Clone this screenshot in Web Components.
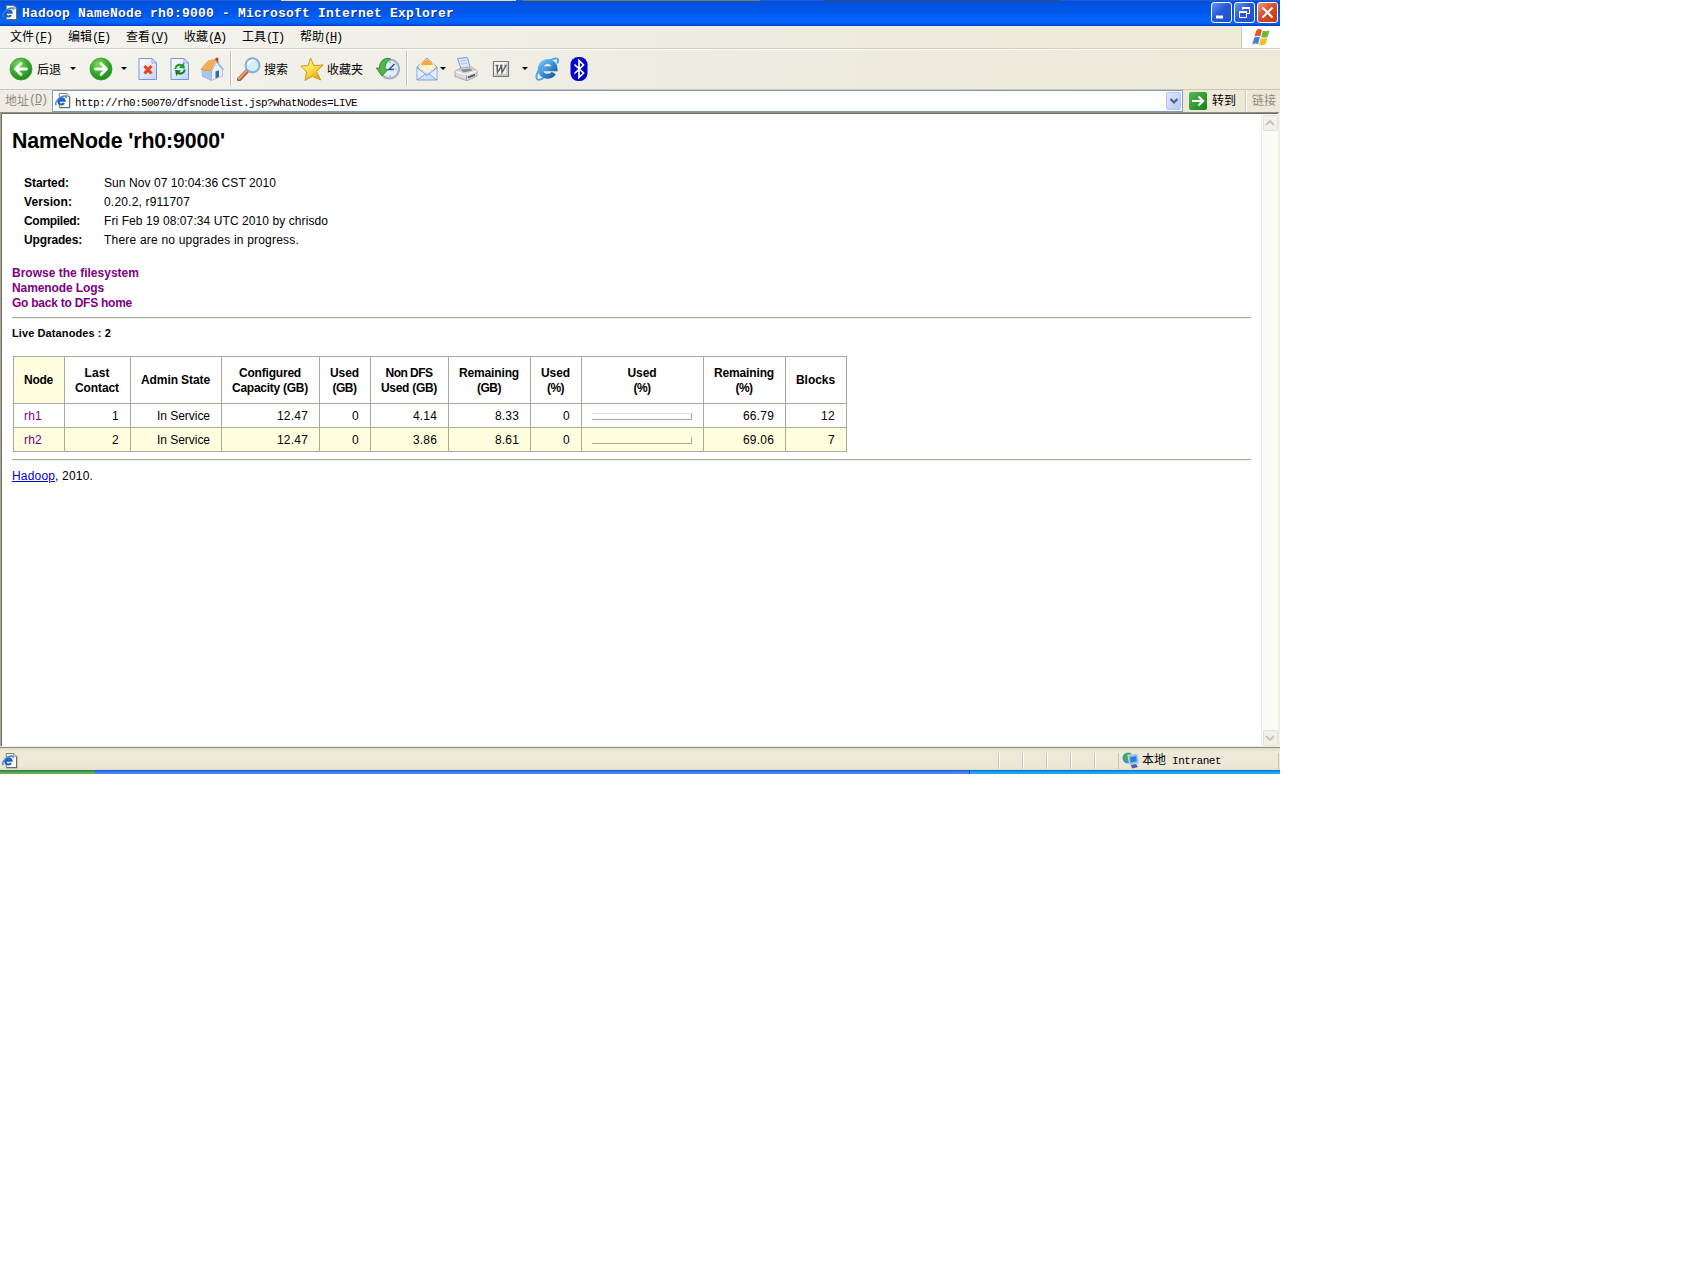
<!DOCTYPE html>
<html lang="zh-CN">
<head>
<meta charset="utf-8">
<title>Hadoop NameNode rh0:9000</title>
<style>
  html, body { margin: 0; background: #fff; }
  body { font: 12px/15px "Liberation Sans", "Noto Sans CJK SC", sans-serif; color: #000; }
</style>
</head>
<body>
<xp-window>
  <xp-title slot="title"></xp-title>
  <xp-menu slot="menu"></xp-menu>
  <xp-toolbar slot="toolbar"></xp-toolbar>
  <xp-address slot="address"></xp-address>
  <dfs-page></dfs-page>
  <xp-status slot="status"></xp-status>
</xp-window>

<script>
const SONG = '"Liberation Mono", "Noto Sans CJK SC", monospace';

// Small base: every element renders its own open shadow root
class Base extends HTMLElement {
  constructor() {
    super();
    this.attachShadow({ mode: 'open' });
    this.shadowRoot.innerHTML = this.template();
  }
}

/* ---------- icons ---------- */
const arrowCircle = (d) => `
  <defs><radialGradient id="g" cx=".4" cy=".3" r=".8"><stop offset="0" stop-color="#7fdc62"/><stop offset=".55" stop-color="#35a62b"/><stop offset="1" stop-color="#167d18"/></radialGradient></defs>
  <circle cx="12" cy="12" r="11" fill="url(#g)" stroke="#3c9a35" stroke-width=".8"/>
  <path d="${d}" fill="none" stroke="#fff" stroke-width="2.8" stroke-linecap="round" stroke-linejoin="round"/>`;

const sheet = `
  <defs><linearGradient id="p" x2="1" y2="1"><stop offset="0" stop-color="#fff"/><stop offset="1" stop-color="#bfd4f8"/></linearGradient></defs>
  <path d="M3 1.5h13l4.5 4.5v16.5h-17.500z" fill="url(#p)" stroke="#7b97cc"/><path d="M16 1.500v4.500h4.500z" fill="#d7e4fb" stroke="#7b97cc" stroke-width=".7"/>`;

const iePage = `
  <path d="M4.500 .5h8l3 3v12h-11z" fill="#fdfdf6" stroke="#77776e"/><path d="M12.500 .5v3h3" fill="#ddd" stroke="#77776e" stroke-width=".8"/><path d="M15.700 4v12M5 15.700h11" stroke="#55554e" stroke-width=".8"/>
  <path d="M9.600 10.800a3.300 3.300 0 1 1 .5-2.700H4" fill="none" stroke="#1b62c4" stroke-width="2.300"/>
  <path d="M1.500 13C-1.500 10.500 5 3 11 3.200c1.200.2 1 1.200.5 2.300" fill="none" stroke="#3a86dc" stroke-width="1.400"/>`;

const ICONS = {
  back: [24, arrowCircle('M12 6.500L6.500 12l5.500 5.500M7 12h10.500')],
  forward: [24, arrowCircle('M12 6.500l5.500 5.500-5.500 5.500M17 12H6.500')],
  stop: [24, sheet + '<path d="M8.500 9l7 7.500M15.500 9l-7 7.500" stroke="#f0401c" stroke-width="3.200"/>'],
  refresh: [24, sheet + `
    <path d="M6.500 12c.3-4.500 4.500-6.200 7.600-4.600l1.600-2 1.300 6-6-.3 1.600-1.800c-2-.8-4 .5-4.300 2.700z" fill="#239b2c"/>
    <path d="M17.500 12.500c-.3 4.500-4.500 6.200-7.600 4.600l-1.600 2-1.300-6 6 .3-1.600 1.800c2 .8 4-.5 4.300-2.700z" fill="#168020"/>`],
  home: [24, `
    <path d="M2 12.500l9.500 1v10L2.500 19.500z" fill="#a9c6f0" stroke="#8aa6d4" stroke-width=".6"/>
    <path d="M11.500 14L16.500 5l6 8v6l-11 4.500z" fill="#e8f0fc" stroke="#93a9d3" stroke-width=".7"/>
    <path d="M.8 12.500L8 4l8.500-2-6 12z" fill="#f7ad52" stroke="#dd8a32" stroke-width=".6"/>
    <path d="M15.800 3l7.700 10" stroke="#a5b8da" stroke-width="1.600"/><path d="M15.500 .8h2.800v5.200L15.500 3z" fill="#d43a22"/>
    <path d="M15.500 14.500l3.500-1.200v6.500l-3.500 1.600z" fill="#3d66a8"/>`],
  search: [24, `
    <path d="M2 22.500l8-8.500" stroke="#a35f37" stroke-width="4.200" stroke-linecap="round"/><path d="M2 21.800l7.500-8" stroke="#e2a47a" stroke-width="2" stroke-linecap="round"/>
    <circle cx="15.500" cy="8.300" r="7" fill="#d3eefe" stroke="#86a9d8" stroke-width="2"/><path d="M10.800 8c.4-3 3-4.800 5.500-4.400" fill="none" stroke="#fff" stroke-width="2"/>`],
  star: [24, `
    <defs><linearGradient id="s" x2=".6" y2="1"><stop offset="0" stop-color="#fff7a5"/><stop offset=".6" stop-color="#ffdd45"/><stop offset="1" stop-color="#e9a21b"/></linearGradient></defs>
    <path d="M10.500 1l3.400 7.700 9.300-.8-6.800 6.600 4.400 8.500-8.500-3.700L5 23.500l1.600-8.700L.8 9l7.400-.4z" fill="url(#s)" stroke="#cd951d" stroke-linejoin="round"/>`],
  history: [24, `
    <circle cx="13.500" cy="12" r="9.500" fill="#e1eefb" stroke="#a3b0c6" stroke-width="2.200"/>
    <path d="M13 12.500l5.500-5.500M12 12.500h6" stroke="#2f5f94" stroke-width="1.600"/><path d="M14 4.500V6M14 18.500V20M20.500 12H19" stroke="#7f95b2" stroke-width="1.200"/>
    <path d="M14.500 1.800C8-.2 3.500 4.500 3.500 11L.3 11l5.700 8 6-6.500-3-.5c0-4 1.500-6.700 5.500-10.200z" fill="#51b648" stroke="#24812a" stroke-width=".8"/>`],
  mail: [24, `
    <path d="M2 10L12 1l10 9v13H2z" fill="#cfe0fb" stroke="#8ba3d0"/>
    <path d="M4 10.500c1-5.500 4-7.500 8-7.500s7 2 8 7.500L12 16z" fill="#fff3ca"/><path d="M6 8c1-4 3-5 6-5s5 1 6 5z" fill="#f6a94a"/>
    <path d="M2 10.500l8 6.500-8 6M22 10.500L14 17l8 6M10 17l2 1.300 2-1.300" fill="none" stroke="#7695cf"/><path d="M2.600 12v10l7-5zM21.400 12v10l-7-5z" fill="#e6effd"/>`],
  print: [24, `
    <path d="M3.500 1.500l10-1 3 11.500-9 1z" fill="#d7e8ff" stroke="#7b99d1"/><path d="M6.500 4l6-.6M7.200 7l6-.6" stroke="#a6c0ea"/>
    <path d="M1 14l6-3 10-1 6 3.500v5.500L13 23.800 1 19.500z" fill="#d9d9d7" stroke="#9b9b9b" stroke-width=".8"/>
    <path d="M6.500 12.500l10-1 2 2-9 2z" fill="#8b8c92"/><path d="M1.500 14.500l10.500 3.300 10.500-4" fill="none" stroke="#fff" stroke-width="1.300"/>
    <path d="M12.500 18v5" stroke="#a0a0a0"/><path d="M14 19.500l7-2.700v2L14 21.500z" fill="#555"/>`],
  word: [18, `
    <path d="M1.500 1.500h15v15h-15z" fill="#f5f5f3" stroke="#777" stroke-width="1.200"/><path d="M3 15h12V3" fill="none" stroke="#b7b7b5" stroke-width="1.300"/>
    <path d="M3.500 5.500h3M5 6l.5 6.500L9.500 6l.5 6.500L14 5.500M8 5.500h2.500M12.500 5.500h2" fill="none" stroke="#62625f" stroke-width="1.500"/>`],
  ie: [24, `
    <defs><linearGradient id="e" x2="1" y2="1"><stop offset="0" stop-color="#73c7fa"/><stop offset="1" stop-color="#0e5cab"/></linearGradient></defs>
    <path d="M18.800 16a7.400 7.400 0 1 1 1.200-4.200H8" fill="none" stroke="url(#e)" stroke-width="5"/>
    <path d="M2.500 22.500C-2 18 10.500 2.500 20.800 1.400c3-.2 2.700 2.600 1.300 5M2.500 22.500c1.800 1 4-.2 6-1.600" fill="none" stroke="#4aa6e6" stroke-width="1.900"/>`],
  bluetooth: [24, `
    <rect x="3.500" width="17" height="24" rx="7.500" fill="#0505c8"/>
    <path d="M7.500 7.500l9 8.500-4.500 4.500v-17L16.500 8l-9 8.500" fill="none" stroke="#fff" stroke-width="1.700"/>`],
  page: [17, iePage],
  zone: [17, `
    <circle cx="6" cy="6" r="5.500" fill="#3d8fd8"/><path d="M1 5c1-4 6-5 8-3L7 4l-.5 6-4-2z" fill="#45aa45"/>
    <path d="M6 3.500l9.500-1.500 1 9-8.500 2z" fill="#78b7f3" stroke="#c3d3e8" stroke-width="1.300"/><path d="M8 5.500l6-1.300.6 5-6 1.300z" fill="#2b7fd6"/>
    <path d="M9 13l5-1 2 3-6 1.500z" fill="#45619a"/>`],
  flag: [20, `
    <path d="M4.500 2.500C7 .5 8.500 1 10.500 2.200L8.600 9C6.500 7.700 4.800 7.800 2.500 9.300z" fill="#e8582b"/>
    <path d="M11.600 2.700c2.200 1.200 4.200 1 6.900-.4l-2 6.900c-2.500 1.400-4.500 1.300-6.800.1z" fill="#73b533"/>
    <path d="M2.200 10.400c2.300-1.500 4-1.400 6.100-.3l-2 7C4.300 15.800 2.700 16 .3 17.400z" fill="#3f82dc"/>
    <path d="M9.400 10.500c2.200 1.200 4.200 1 6.800-.3l-2 7c-2.500 1.300-4.500 1.200-6.800 0z" fill="#f5be25"/>`],
};

class XpIcon extends HTMLElement {
  connectedCallback() {
    if (this.shadowRoot) return;
    this.attachShadow({ mode: 'open' });
    const [box, body] = ICONS[this.getAttribute('name')];
    const size = this.getAttribute('size') || box;
    this.shadowRoot.innerHTML = `
      <style>:host { display: block; flex: none; } svg { display: block; }</style>
      <svg width="${size}" height="${size}" viewBox="0 0 ${box} ${box}">${body}</svg>`;
  }
}

// Text run stretched or tightened to a fixed advance width
class FitText extends HTMLElement {
  connectedCallback() {
    if (this.shadowRoot) return;
    this.attachShadow({ mode: 'open' });
    this.shadowRoot.innerHTML = `
      <style>:host { display: inline-block; white-space: nowrap; flex: none; }</style><slot></slot>`;
    this.style.width = 'max-content';
    const want = Number(this.getAttribute('w'));
    const have = this.getBoundingClientRect().width;
    const count = this.textContent.length;
    this.style.letterSpacing = ((want - have) / count).toFixed(3) + 'px';
    this.style.width = want + 'px';
  }
}

/* ---------- window frame ---------- */
class XpWindow extends Base {
  template() {
    return `
      <style>
        :host { display: grid; width: 1280px; height: 774px; grid-template-rows: 26px 24px 40px 22px 1fr 23px 4px; background: #ece9d8; overflow: hidden; }
        .view { display: flex; min-height: 0; background: #fff; border-top: 1px solid #8f8e82; border-left: 1px solid #aca899; border-right: 2px solid #f1efe2; border-bottom: 1px solid #f1efe2; }
        .inner { flex: 1; display: flex; border-top: 1px solid #716f64; border-left: 1px solid #716f64; }
        .content { flex: 1; }
        .scroll { width: 17px; box-sizing: border-box; background: #fbfbf8; border-left: 1px solid #eeede5; display: flex; flex-direction: column; justify-content: space-between; align-items: center; padding: 1px 0 0; }
        .scroll span { width: 13px; height: 14px; border: 1px solid #e4e2d6; border-radius: 2px; background: #f2f1ea; display: grid; place-items: center; }
        .task { display: flex; }
        .task i { height: 4px; }
        .start { width: 95px; background: linear-gradient(#347638, #58a64f 60%, #6cb966); }
        .bar { flex: 1; background: linear-gradient(#1d51c2, #3c81f3 50%, #4b8dfa); }
        .tray { width: 310px; border-left: 1px solid #0b4aa8; background: linear-gradient(#0c66c0, #18a4f4 50%, #22aefa); }
      </style>
      <slot name="title"></slot>
      <slot name="menu"></slot>
      <slot name="toolbar"></slot>
      <slot name="address"></slot>
      <div class="view"><div class="inner">
        <div class="content"><slot></slot></div>
        <div class="scroll">
          <span><svg width="10" height="8"><path d="M1 6l4-4 4 4" fill="none" stroke="#c7c5b8" stroke-width="2"/></svg></span>
          <span><svg width="10" height="8"><path d="M1 2l4 4 4-4" fill="none" stroke="#c7c5b8" stroke-width="2"/></svg></span>
        </div>
      </div></div>
      <slot name="status"></slot>
      <div class="task"><i class="start"></i><i class="bar"></i><i class="tray"></i></div>`;
  }
}

class XpTitle extends Base {
  template() {
    return `
      <style>
        :host { display: grid; grid-template-rows: 1px 25px; background: #0a5be4; }
        .behind { background: linear-gradient(90deg, #1560dc 281px, #e6d9ad 281px 516px, #1560dc 516px 523px, #69835c 523px 760px, #1560dc 760px 824px, #34506e 824px 1061px, #1560dc 1061px); height: 1px; }
        .bar { display: flex; align-items: center; padding: 0 2px 2px 2px; background: linear-gradient(#0a4cd2, #0054e3 15%, #0057ea 45%, #0066ff 75%, #0062f6 88%, #0040c0); }
        .text { margin-left: 4px; padding-top: 2px; font: bold 13px/20px ${SONG}; color: #fff; text-shadow: 1px 1px #0b2f8c; }
        .buttons { margin-left: auto; display: flex; gap: 2px; }
        .b { width: 19px; height: 19px; border: 1px solid #fff; border-radius: 3px; background: linear-gradient(135deg, #6b93f0, #2859dc 45%, #1d4fd4); }
        .x { background: linear-gradient(135deg, #ee9a80, #dd4c25 45%, #c8340e); }
        svg { display: block; }
      </style>
      <div class="behind"></div>
      <div class="bar">
        <xp-icon name="page" size="16"></xp-icon>
        <span class="text"><fit-text w="432">Hadoop NameNode rh0:9000 - Microsoft Internet Explorer</fit-text></span>
        <div class="buttons">
          <span class="b"><svg width="19" height="19"><path d="M4 14h7" stroke="#fff" stroke-width="3"/></svg></span>
          <span class="b"><svg width="19" height="19" fill="none" stroke="#fff"><path d="M7.500 7V4.500h7v6H12"/><path d="M7 5h8" stroke-width="2"/><path d="M4.500 8.500h7v6h-7z"/><path d="M4 9h8" stroke-width="2"/></svg></span>
          <span class="b x"><svg width="19" height="19"><path d="M4.500 4.500l10 10M14.500 4.500l-10 10" stroke="#fff" stroke-width="2.200"/></svg></span>
        </div>
      </div>`;
  }
}

class XpMenu extends Base {
  template() {
    const items = [['文件', 'F'], ['编辑', 'E'], ['查看', 'V'], ['收藏', 'A'], ['工具', 'T'], ['帮助', 'H']];
    return `
      <style>
        :host { display: flex; box-sizing: border-box; background: linear-gradient(90deg, #f4f3ee, #eeece0 60%, #ece9d8); border-bottom: 1px solid #fff; font: 12px/22px ${SONG}; }
        .row { flex: 1; display: flex; padding: 1px 0 0 10px; box-sizing: border-box; border-bottom: 1px solid #d0cdbd; }
        .item { width: 58px; white-space: nowrap; display: flex; }
        u { text-underline-offset: 1px; }
        .flag { width: 38px; background: #fff; border-left: 1px solid #d0cdbd; border-bottom: 1px solid #d0cdbd; display: grid; place-items: center; }
      </style>
      <div class="row">${items.map(([t, k]) => `<span class="item">${t}<fit-text w="18">(<u>${k}</u>)</fit-text></span>`).join('')}</div>
      <div class="flag"><xp-icon name="flag" size="19"></xp-icon></div>`;
  }
}

class XpToolbar extends Base {
  template() {
    // gap before each part, then the part itself
    const ic = (gap, name, size = 24) => `<xp-icon name="${name}" size="${size}" style="margin-left:${gap}px"></xp-icon>`;
    const tx = (gap, t) => `<span style="margin-left:${gap}px">${t}</span>`;
    const dd = (gap) => `<b style="margin-left:${gap}px"></b>`;
    const sep = (gap) => `<i style="margin-left:${gap}px"></i>`;
    return `
      <style>
        :host { display: flex; align-items: center; box-sizing: border-box; padding-bottom: 2px; background: linear-gradient(90deg, #f4f3ee, #eeece0 60%, #ece9d8); border-bottom: 1px solid #c9c6b7; font: 12px/18px "Noto Sans CJK SC", sans-serif; }
        span { flex: none; white-space: nowrap; }
        b { flex: none; border: 3px solid transparent; border-top-color: #000; border-bottom: 0; }
        i { flex: none; width: 1px; height: 35px; background: #c5c2b4; border-right: 1px solid #fff; }
      </style>
      ${ic(9, 'back')}${tx(4, '后退')}${dd(9)}
      ${ic(13, 'forward')}${dd(8)}
      ${ic(9, 'stop')}${ic(8, 'refresh')}${ic(8, 'home')}${sep(6)}
      ${ic(5, 'search')}${tx(3, '搜索')}${ic(12, 'star')}${tx(3, '收藏夹')}${ic(13, 'history')}${sep(6)}
      ${ic(7, 'mail')}${dd(1)}${ic(8, 'print')}${ic(14, 'word', 18)}${dd(12)}
      ${ic(7, 'ie')}${ic(8, 'bluetooth')}`;
  }
}

class XpAddress extends Base {
  template() {
    return `
      <style>
        :host { display: flex; align-items: stretch; background: linear-gradient(90deg, #efede3, #ece9d8); font: 12px/20px "Noto Sans CJK SC", sans-serif; }
        .label { width: 47px; padding-left: 5px; color: #8d8b80; display: flex; }
        .label fit-text { font: 12px/21px ${SONG}; }
        .box { width: 1129px; border: 1px solid #7f9db9; background: #fff; display: flex; align-items: center; height: 20px; }
        .box xp-icon { margin-left: 2px; }
        .url { margin-left: 4px; font: 11px/18px ${SONG}; padding-top: 3px; }
        .drop { margin: 0 1px 0 auto; width: 13px; height: 16px; border: 1px solid #b3c8f5; border-radius: 2px; background: linear-gradient(135deg, #dde8fe, #b5cbf8); display: grid; place-items: center; }
        .go { margin: 2px 5px 0 6px; width: 18px; height: 18px; border-radius: 2px; background: linear-gradient(135deg, #57b650, #16821b); }
        .links { margin-left: 10px; padding-left: 5px; color: #8d8b80; border-left: 1px solid #fff; box-shadow: -1px 0 #cfccbc; }
        svg { display: block; }
      </style>
      <span class="label">地址<fit-text w="18">(<u>D</u>)</fit-text></span>
      <div class="box">
        <xp-icon name="page" size="16"></xp-icon>
        <span class="url"><fit-text w="282">http://rh0:50070/dfsnodelist.jsp?whatNodes=LIVE</fit-text></span>
        <span class="drop"><svg width="10" height="8"><path d="M1.500 2L5 5.500 8.500 2" fill="none" stroke="#4d6185" stroke-width="2.200"/></svg></span>
      </div>
      <span class="go"><svg width="18" height="18"><path d="M3 9h11M9.500 4.500L14 9l-4.500 4.500" fill="none" stroke="#fff" stroke-width="2.200"/></svg></span>
      <span>转到</span>
      <span class="links">链接</span>`;
  }
}

class XpStatus extends Base {
  template() {
    return `
      <style>
        :host { display: flex; align-items: center; box-sizing: border-box; border-top: 1px solid #8f8d80; background: linear-gradient(#dcd9c9, #ece9d8 15%, #ece9d8 85%, #e0ddcc); padding: 3px 1px 0 2px; font: 11px/18px ${SONG}; }
        .panes { margin-left: auto; display: flex; }
        .panes i { width: 22px; height: 16px; border-left: 1px solid #c8c5b4; box-shadow: inset 1px 0 #fff; margin-right: 1px; }
        .zone { width: 161px; height: 16px; border-left: 1px solid #c8c5b4; border-right: 1px solid #c8c5b4; display: flex; align-items: center; padding-left: 4px; box-sizing: border-box; }
        .zone xp-icon { margin-left: -1px; }
        .cjk { font-size: 12px; margin-left: 3px; }
      </style>
      <xp-icon name="page" size="16"></xp-icon>
      <div class="panes"><i></i><i></i><i></i><i></i><i></i></div>
      <div class="zone"><xp-icon name="zone" size="17"></xp-icon><span class="cjk">本地</span><fit-text style="margin-left:6px" w="49">Intranet</fit-text></div>`;
  }
}

/* ---------- page ---------- */
class DfsPage extends Base {
  template() {
    const info = [
      ['Started:', 45, 'Sun Nov 07 10:04:36 CST 2010', 172],
      ['Version:', 48, '0.20.2, r911707', 86],
      ['Compiled:', 56, 'Fri Feb 19 08:07:34 UTC 2010 by chrisdo', 224],
      ['Upgrades:', 58, 'There are no upgrades in progress.', 195],
    ];
    return `
      <style>
        :host { display: block; padding: 0 10px; }
        h1 { margin: 0; padding-top: 14px; font-size: 21.330px; line-height: 26px; }
        .info { margin-top: 20px; display: grid; grid-template-columns: 80px auto; grid-auto-rows: 19px; line-height: 19px; padding-left: 12px; }
        .links { margin-top: 16px; display: flex; flex-direction: column; font-weight: bold; color: #800080; }
        hr { margin: 0; border: 0; height: 1px; background: #aca899; border-bottom: 1px solid #f3f2ea; }
        .live { padding: 7px 0 16px; font-weight: bold; font-size: 11px; line-height: 14px; }
        .foot { margin-top: 8px; }
        a { color: #0000e0; text-decoration: underline; }
      </style>
      <h1><fit-text w="213">NameNode 'rh0:9000'</fit-text></h1>
      <div class="info">${info.map(([k, kw, v, vw]) => `<b><fit-text w="${kw}">${k}</fit-text></b><span><fit-text w="${vw}">${v}</fit-text></span>`).join('')}</div>
      <div class="links">
        <fit-text w="127">Browse the filesystem</fit-text>
        <fit-text w="92">Namenode Logs</fit-text>
        <fit-text w="120">Go back to DFS home</fit-text>
      </div>
      <hr style="margin-top:6px">
      <div class="live"><fit-text w="99">Live Datanodes : 2</fit-text></div>
      <node-table></node-table>
      <hr style="margin-top:7px">
      <div class="foot"><fit-text w="81"><a>Hadoop</a>, 2010.</fit-text></div>`;
  }
}

class NodeTable extends Base {
  template() {
    // column width, header lines with their text widths
    const cols = [
      [51, ['Node', 29]],
      [66, ['Last', 25], ['Contact', 44]],
      [91, ['Admin State', 69]],
      [98, ['Configured', 62], ['Capacity (GB)', 76]],
      [51, ['Used', 29], ['(GB)', 24]],
      [78, ['Non DFS', 47], ['Used (GB)', 56]],
      [82, ['Remaining', 60], ['(GB)', 24]],
      [51, ['Used', 29], ['(%)', 17]],
      [122, ['Used', 29], ['(%)', 17]],
      [82, ['Remaining', 60], ['(%)', 17]],
      [61, ['Blocks', 39]],
    ];
    const rows = [
      ['rh1', '1', 'In Service', '12.47', '0', '4.14', '8.33', '0', null, '66.79', '12'],
      ['rh2', '2', 'In Service', '12.47', '0', '3.86', '8.61', '0', null, '69.06', '7'],
    ];
    const widths = { 'rh1': 18, 'rh2': 18, 'In Service': 53 };
    const cell = (v) => {
      if (v === null) return '<td><div class="bar"></div></td>';
      return `<td><fit-text w="${widths[v] || (v.includes('.') ? v.length * 7 - 4 : v.length * 7)}">${v}</fit-text></td>`;
    };
    return `
      <style>
        :host { display: block; padding-left: 1px; }
        table { border-collapse: collapse; table-layout: fixed; width: 834px; }
        th, td { border: 1px solid #aca899; padding: 0; line-height: 15px; }
        th { height: 45px; padding: 1px 1px 0 0; text-align: center; }
        th fit-text { display: block; margin: 0 auto; }
        th:first-child { background: #ffffdf; }
        td { height: 22px; padding: 1px 11px 0 0; text-align: right; }
        td:first-child { padding: 1px 0 0 10px; text-align: left; color: #800080; }
        tr:nth-child(3) td { background: #ffffdf; }
        .bar { width: 99px; height: 6px; margin-left: 10px; border: 1px solid #aca899; border-width: 0 1px 1px 0; }
        tr:nth-child(2) .bar { height: 5px; border-top: 1px solid #dcdcdc; }
      </style>
      <table>
        <colgroup>${cols.map(([w]) => `<col style="width:${w}px">`).join('')}</colgroup>
        <tr>${cols.map(([, ...lines]) => `<th>${lines.map(([t, w]) => `<fit-text w="${w}">${t}</fit-text>`).join('')}</th>`).join('')}</tr>
        ${rows.map((r) => `<tr>${r.map(cell).join('')}</tr>`).join('')}
      </table>`;
  }
}

customElements.define('xp-icon', XpIcon);
customElements.define('xp-window', XpWindow);
customElements.define('xp-title', XpTitle);
customElements.define('xp-menu', XpMenu);
customElements.define('xp-toolbar', XpToolbar);
customElements.define('xp-address', XpAddress);
customElements.define('xp-status', XpStatus);
customElements.define('dfs-page', DfsPage);
customElements.define('node-table', NodeTable);
// last, so that inherited fonts are settled before measuring
customElements.define('fit-text', FitText);
</script>
</body>
</html>
